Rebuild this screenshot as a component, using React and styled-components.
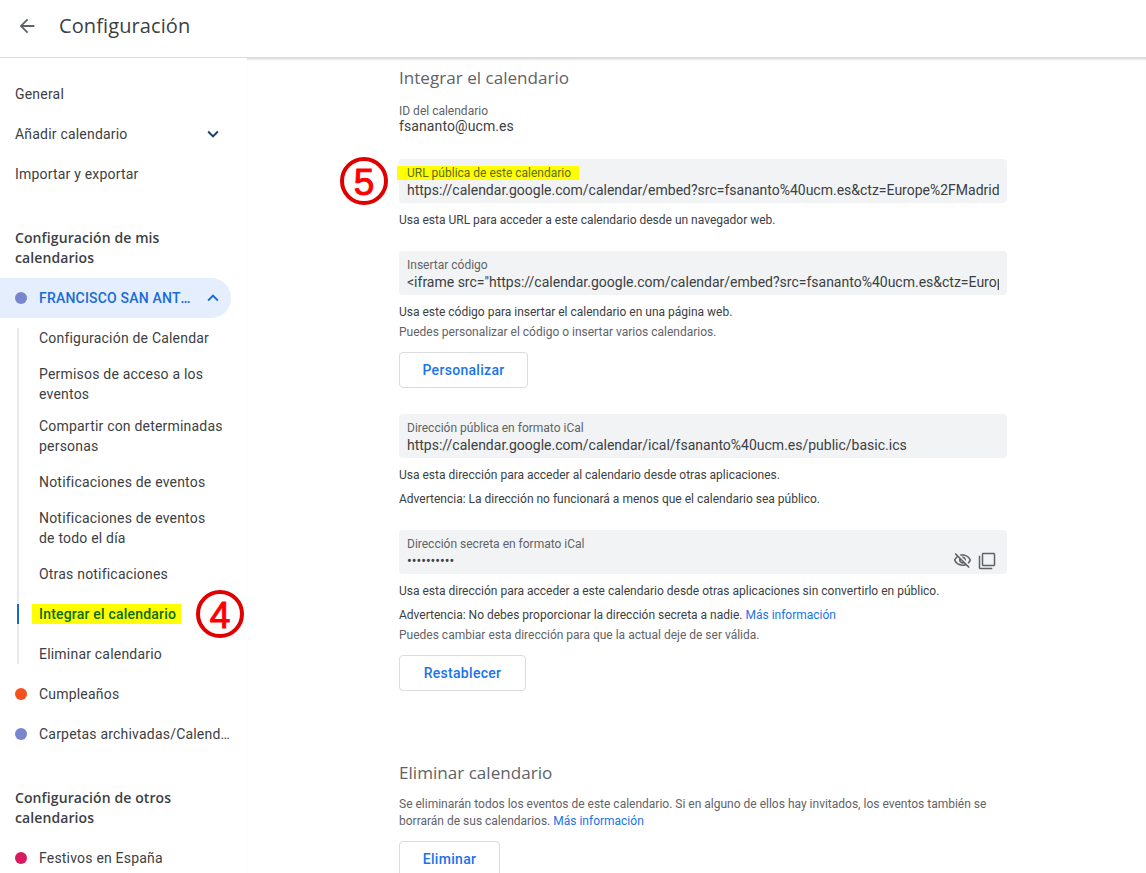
import React from 'react';
import styled, { createGlobalStyle } from 'styled-components';
import { MdArrowBack, MdExpandMore, MdExpandLess, MdOutlineVisibilityOff } from 'react-icons/md';

const GlobalStyle = createGlobalStyle`
	html, body {
		margin: 0;
		height: 100%;
		overflow: hidden;
		background: #fff;
	}
	body {
		font-family: 'Roboto', 'Liberation Sans', sans-serif;
		color: #3c4043;
	}
`;

const Page = styled.div`
	display: flex;
	flex-direction: column;
	height: 873px;
	overflow: hidden;
`;

const Header = styled.header`
	display: flex;
	align-items: center;
	flex: none;
	height: 58px;
	padding-left: 16px;
	padding-bottom: 6px;
	box-sizing: border-box;
	border-bottom: 1px solid #dadce0;
`;

const BackIcon = styled(MdArrowBack)`
	font-size: 22px;
	color: #5f6368;
`;

const PageTitle = styled.h1`
	margin: 0 0 0 21px;
	font-family: 'Open Sans', sans-serif;
	font-size: 20px;
	font-weight: 400;
	letter-spacing: 0.1px;
	color: #3c4043;
`;

const Body = styled.div`
	display: flex;
	flex: 1;
	min-height: 0;
`;

const Sidebar = styled.nav`
	flex: none;
	width: 247px;
	padding-top: 16px;
	box-sizing: border-box;
`;

const Row = styled.div`
	display: flex;
	align-items: center;
	width: 231px;
	height: 40px;
	padding-left: 15px;
	box-sizing: border-box;
	font-size: 14px;
	line-height: 20px;
	letter-spacing: 0.2px;
	color: #3c4043;
`;

const RowIcon = styled(MdExpandMore)`
	margin-left: auto;
	margin-right: 7px;
	font-size: 22px;
	color: #17406d;
`;

const SideHeading = styled.h2`
	width: 190px;
	margin: ${({ $top }) => $top}px 0 10px 15px;
	font-family: 'Open Sans', sans-serif;
	font-size: 14px;
	font-weight: 600;
	letter-spacing: 0.1px;
	line-height: 20px;
	color: #3c4043;
`;

const Dot = styled.span`
	flex: none;
	width: 12px;
	height: 12px;
	margin-right: 12px;
	border-radius: 50%;
	background: ${({ $color }) => $color};
`;

const ActiveRow = styled(Row)`
	border-radius: 0 20px 20px 0;
	background: #e4eefd;
	color: #1a6bd8;
	font-weight: 500;
`;

const ActiveIcon = styled(RowIcon).attrs({ as: MdExpandLess })`
	color: #1a6bd8;
`;

const Ellipsis = styled.span`
	overflow: hidden;
	white-space: nowrap;
	text-overflow: ellipsis;
	max-width: ${({ $width }) => $width}px;
`;

const SubList = styled.ul`
	position: relative;
	margin: 0;
	padding: 0;
	list-style: none;
`;

const Rail = styled.span`
	position: absolute;
	left: 17px;
	top: 10px;
	bottom: 10px;
	width: 2px;
	background: #e8eaed;
`;

const SubItem = styled.li`
	position: relative;
	display: flex;
	align-items: center;
	width: 224px;
	min-height: 40px;
	padding: 6px 0 6px 39px;
	box-sizing: border-box;
	font-size: 14px;
	line-height: 20px;
	letter-spacing: 0.2px;
	color: #3c4043;
`;

const ActiveMark = styled.span`
	position: absolute;
	left: 17px;
	top: 10px;
	width: 2px;
	height: 20px;
	background: #1967d2;
`;

const Highlight = styled.span`
	margin-left: -7px;
	padding: 0 5px 0 7px;
	background: #ffff00;
	color: #0a6b0a;
	font-weight: 500;
	white-space: nowrap;
`;

const Step = styled.span`
	position: absolute;
	display: flex;
	align-items: center;
	justify-content: center;
	left: ${({ $left }) => $left}px;
	top: ${({ $top }) => $top}px;
	width: 48px;
	height: 48px;
	padding-top: 3px;
	box-sizing: border-box;
	border: 4px solid #e00000;
	border-radius: 50%;
	font-family: 'Liberation Sans', sans-serif;
	font-size: 37px;
	font-weight: 400;
	letter-spacing: 0;
	-webkit-text-stroke: 1px #ff0000;
	color: #ff0000;
`;

const Main = styled.main`
	position: relative;
	flex: 1;
	min-width: 0;
	padding: 8px 0 0 152px;
	box-shadow: inset 0 3px 3px -2px rgba(60, 64, 67, 0.25);
`;

const Section = styled.section`
	width: 608px;
`;

const SectionTitle = styled.h2`
	margin: 0;
	font-family: 'Open Sans', sans-serif;
	font-size: 17.1px;
	font-weight: 400;
	line-height: 24px;
	color: #5f6368;
`;

const CalendarId = styled.div`
	margin-top: 13px;
	margin-bottom: 26px;
`;

const SmallLabel = styled.div`
	font-size: 12px;
	line-height: 16px;
	color: #5f6368;
`;

const IdValue = styled.div`
	font-size: 14px;
	line-height: 14px;
	letter-spacing: 0.1px;
	color: #3c4043;
`;

const Field = styled.div`
	position: relative;
	height: 44px;
	margin-top: ${({ $top }) => $top ?? 0}px;
	padding: 7px 8px 0;
	box-sizing: border-box;
	border-radius: 4px;
	background: #f1f3f4;
`;

const FieldLabel = styled.div`
	font-size: 12px;
	line-height: 15px;
	color: #5f6368;
`;

const MarkedLabel = styled.span`
	margin-left: -10px;
	padding: 0 8px 0 10px;
	background: #ffff00;
	color: #5f6b1a;
`;

const FieldValue = styled.div`
	margin-top: -1px;
	overflow: hidden;
	font-size: 14px;
	line-height: 20px;
	white-space: nowrap;
	color: #3c4043;
`;

const FieldIcons = styled.div`
	position: absolute;
	right: 11px;
	bottom: 4px;
	display: flex;
	align-items: center;
	gap: 6px;
	color: #5f6368;
`;

const Help = styled.p`
	margin: ${({ $top }) => $top ?? 0}px 0 0;
	font-size: 12px;
	line-height: ${({ $tall }) => ($tall ? 17 : 16)}px;
	color: ${({ $muted }) => ($muted ? '#5f6368' : '#3c4043')};
`;

const Link = styled.a`
	color: #1a73e8;
	text-decoration: none;
`;

const Button = styled.button`
	display: block;
	width: ${({ $width }) => $width}px;
	height: 36px;
	margin-top: ${({ $top }) => $top}px;
	padding: 0;
	border: 1px solid #dadce0;
	border-radius: 4px;
	background: #fff;
	font-family: 'Roboto', sans-serif;
	font-size: 14px;
	font-weight: 500;
	letter-spacing: 0.3px;
	color: #1a73e8;
`;

const SecondSection = styled(Section)`
	margin-top: 70px;
`;

const subItems = [
	'Configuración de Calendar',
	'Permisos de acceso a los eventos',
	'Compartir con determinadas personas',
	'Notificaciones de eventos',
	'Notificaciones de eventos de todo el día',
	'Otras notificaciones',
];

const CopyIcon = () => (
	<svg width="18" height="18" viewBox="0 0 24 24" fill="currentColor">
		<path d="M3 5H1v16c0 1.1.9 2 2 2h16v-2H3V5zm18-4H7c-1.1 0-2 .9-2 2v14c0 1.1.9 2 2 2h14c1.1 0 2-.9 2-2V3c0-1.1-.9-2-2-2zm0 16H7V3h14v14z" />
	</svg>
);

const App = () => (
	<Page>
		<GlobalStyle />
		<Header>
			<BackIcon />
			<PageTitle>Configuración</PageTitle>
		</Header>
		<Body>
			<Sidebar>
				<Row>General</Row>
				<Row>
					Añadir calendario
					<RowIcon />
				</Row>
				<Row>Importar y exportar</Row>

				<SideHeading $top={34}>Configuración de mis calendarios</SideHeading>
				<ActiveRow>
					<Dot $color="#7986cb" />
					<Ellipsis $width={153}>FRANCISCO SAN ANTONIO</Ellipsis>
					<ActiveIcon />
				</ActiveRow>
				<SubList>
					<Rail />
					{subItems.map((item) => (
						<SubItem key={item}>{item}</SubItem>
					))}
					<SubItem>
						<ActiveMark />
						<Highlight>Integrar el calendario</Highlight>
						<Step $left={196} $top={-4}>4</Step>
					</SubItem>
					<SubItem>Eliminar calendario</SubItem>
				</SubList>
				<Row>
					<Dot $color="#f4511e" />
					Cumpleaños
				</Row>
				<Row>
					<Dot $color="#7986cb" />
					<Ellipsis $width={192}>Carpetas archivadas/Calendarios</Ellipsis>
				</Row>

				<SideHeading $top={34}>Configuración de otros calendarios</SideHeading>
				<Row>
					<Dot $color="#d81b60" />
					Festivos en España
				</Row>
			</Sidebar>

			<Main>
				<Section>
					<SectionTitle>Integrar el calendario</SectionTitle>
					<CalendarId>
						<SmallLabel>ID del calendario</SmallLabel>
						<IdValue>fsananto@ucm.es</IdValue>
					</CalendarId>

					<Field>
						<Step $left={-59} $top={-2}>5</Step>
						<FieldLabel>
							<MarkedLabel>URL pública de este calendario</MarkedLabel>
						</FieldLabel>
						<FieldValue>https://calendar.google.com/calendar/embed?src=fsananto%40ucm.es&amp;ctz=Europe%2FMadrid</FieldValue>
					</Field>
					<Help $top={9}>Usa esta URL para acceder a este calendario desde un navegador web.</Help>

					<Field $top={23}>
						<FieldLabel>Insertar código</FieldLabel>
						<FieldValue>
							&lt;iframe src="https://calendar.google.com/calendar/embed?src=fsananto%40ucm.es&amp;ctz=Europe%2FMadrid" style="border: 0"
						</FieldValue>
					</Field>
					<Help $top={9}>Usa este código para insertar el calendario en una página web.</Help>
					<Help $top={4} $muted>Puedes personalizar el código o insertar varios calendarios.</Help>
					<Button $width={129} $top={12}>Personalizar</Button>

					<Field $top={26}>
						<FieldLabel>Dirección pública en formato iCal</FieldLabel>
						<FieldValue>https://calendar.google.com/calendar/ical/fsananto%40ucm.es/public/basic.ics</FieldValue>
					</Field>
					<Help $top={9}>Usa esta dirección para acceder al calendario desde otras aplicaciones.</Help>
					<Help $top={8}>Advertencia: La dirección no funcionará a menos que el calendario sea público.</Help>

					<Field $top={23}>
						<FieldLabel>Dirección secreta en formato iCal</FieldLabel>
						<FieldValue>••••••••••</FieldValue>
						<FieldIcons>
							<MdOutlineVisibilityOff size={19} />
							<CopyIcon />
						</FieldIcons>
					</Field>
					<Help $top={9}>Usa esta dirección para acceder a este calendario desde otras aplicaciones sin convertirlo en público.</Help>
					<Help $top={8}>
						Advertencia: No debes proporcionar la dirección secreta a nadie. <Link>Más información</Link>
					</Help>
					<Help $top={4} $muted>Puedes cambiar esta dirección para que la actual deje de ser válida.</Help>
					<Button $width={127} $top={12}>Restablecer</Button>
				</Section>

				<SecondSection>
					<SectionTitle>Eliminar calendario</SectionTitle>
					<Help $top={11} $muted $tall>
						Se eliminarán todos los eventos de este calendario. Si en alguno de ellos hay invitados, los eventos también se borrarán de sus calendarios. <Link>Más información</Link>
					</Help>
					<Button $width={101} $top={11}>Eliminar</Button>
				</SecondSection>
			</Main>
		</Body>
	</Page>
);

export default App;
